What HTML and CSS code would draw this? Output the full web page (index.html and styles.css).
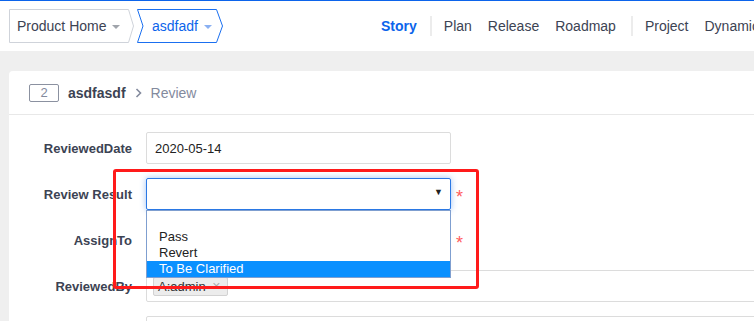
FILE: index.html
```html
<!DOCTYPE html>
<html lang="en">
<head>
  <meta charset="UTF-8">
  <title>Review Story</title>
  <meta name="viewport" content="width=device-width, initial-scale=1">
  <link rel="stylesheet" href="styles.css">
</head>
<body>
  <header class="topbar">
    <div class="crumbs">
      <a class="crumb crumb-home">
        <svg class="crumb-shape" width="125" height="34" viewBox="0 0 125 34">
          <path d="M0.5 0.5 H119.5 L124.5 17 L119.5 33.5 H0.5 Z" fill="#fff" stroke="#cfd3da"/>
        </svg>
        <span class="crumb-text">Product Home</span>
        <i class="caret"></i>
      </a>
      <a class="crumb crumb-active">
        <svg class="crumb-shape" width="86" height="34" viewBox="0 0 86 34">
          <path d="M0.5 0.5 H79.5 L85.5 17 L79.5 33.5 H0.5 L6 17 Z" fill="#fff" stroke="#1a6ff0"/>
        </svg>
        <span class="crumb-text">asdfadf</span>
        <i class="caret"></i>
      </a>
    </div>
    <nav class="nav">
      <a class="nav-item active">Story</a>
      <span class="nav-sep"></span>
      <a class="nav-item">Plan</a>
      <a class="nav-item">Release</a>
      <a class="nav-item">Roadmap</a>
      <span class="nav-sep"></span>
      <a class="nav-item">Project</a>
      <a class="nav-item">Dynamic</a>
    </nav>
  </header>

  <main class="page">
    <section class="card">
      <div class="card-head">
        <span class="story-id">2</span>
        <strong class="story-title">asdfasdf</strong>
        <svg class="chevron" width="7" height="10" viewBox="0 0 7 10">
          <path d="M1.5 1 L5.5 5 L1.5 9" fill="none" stroke="#838a9d" stroke-width="1.6"/>
        </svg>
        <span class="story-step">Review</span>
      </div>

      <form class="review-form">
        <div class="row">
          <label class="row-label">ReviewedDate</label>
          <div class="field field-short">
            <input class="input" type="text" value="2020-05-14" readonly>
          </div>
        </div>

        <div class="row">
          <label class="row-label">Review Result</label>
          <div class="field field-short">
            <div class="select focused"><span class="select-arrow">&#9660;</span></div>
            <!-- open option list -->
            <ul class="options">
              <li class="option"></li>
              <li class="option">Pass</li>
              <li class="option">Revert</li>
              <li class="option selected">To Be Clarified</li>
            </ul>
          </div>
          <span class="req">*</span>
        </div>

        <div class="row">
          <label class="row-label">AssignTo</label>
          <div class="field field-short">
            <div class="select"></div>
          </div>
          <span class="req">*</span>
        </div>

        <div class="row">
          <label class="row-label">ReviewedBy</label>
          <div class="field field-wide">
            <div class="input tags">
              <span class="tag">A:admin <b class="tag-x">&times;</b></span>
            </div>
          </div>
        </div>

        <div class="row">
          <label class="row-label"></label>
          <div class="field field-wide">
            <div class="input"></div>
          </div>
        </div>
      </form>
    </section>
  </main>

  <div class="annotation"></div>
</body>
</html>
```

FILE: styles.css
```css
body {
  margin: 0;
  padding: 0;
  width: 754px;
  height: 321px;
  overflow: hidden;
  position: relative;
  background-color: #efefef;
  font-family: 'Liberation Sans', Arial, sans-serif;
  color: #3c4353;
}

/* top bar */
.topbar {
  display: flex;
  align-items: flex-start;
  height: 42px;
  padding: 8px 0 0 9px;
  background-color: #fff;
  border-top: 1px solid #0c64eb;
  overflow: hidden;
}

.crumbs {
  display: flex;
  gap: 3px;
  flex-shrink: 0;
}

.crumb {
  position: relative;
  display: flex;
  align-items: center;
  height: 34px;
  font-size: 14px;
  cursor: pointer;
}

.crumb-shape {
  position: absolute;
  left: 0;
  top: 0;
}

.crumb-text,
.crumb .caret {
  position: relative;
}

.crumb-home {
  width: 125px;
  padding-left: 8px;
  box-sizing: border-box;
  color: #3c4353;
}

.crumb-active {
  width: 86px;
  padding-left: 15px;
  box-sizing: border-box;
  color: #0c64eb;
}

.caret {
  display: inline-block;
  margin-left: 6px;
  margin-top: 2px;
  border-top: 4px solid #a0a4ab;
  border-left: 4px solid transparent;
  border-right: 4px solid transparent;
}

.crumb-active .caret {
  border-top-color: #8ab0f2;
}

.nav {
  display: flex;
  align-items: center;
  height: 34px;
  margin-left: 158px;
  flex-shrink: 0;
  white-space: nowrap;
  font-size: 14px;
}

.nav-item {
  margin-right: 16px;
  color: #3c4353;
  cursor: pointer;
}

.nav-item.active {
  color: #0c64eb;
  font-weight: bold;
  margin-right: 14px;
}

.nav-sep {
  width: 2px;
  height: 20px;
  background-color: #ececec;
  margin: 0 12px 0 -1px;
}

/* page */
.page {
  padding: 20px 0 0 9px;
}

.card {
  background-color: #fff;
  border-radius: 4px 0 0 0;
  min-height: 260px;
}

.card-head {
  display: flex;
  align-items: center;
  height: 44px;
  box-sizing: border-box;
  padding-left: 20px;
  border-bottom: 1px solid #e8e8e8;
}

.story-id {
  width: 30px;
  height: 18px;
  box-sizing: border-box;
  border: 1px solid #8b91a0;
  border-radius: 2px;
  font-size: 13px;
  line-height: 16px;
  text-align: center;
  color: #838a9d;
}

.story-title {
  margin-left: 9px;
  font-size: 14px;
  color: #3c4353;
}

.chevron {
  margin-left: 9px;
}

.story-step {
  margin-left: 9px;
  font-size: 14px;
  color: #838a9d;
}

/* form */
.review-form {
  padding-top: 17px;
}

.row {
  display: flex;
  align-items: center;
  height: 32px;
  margin-bottom: 14px;
}

.row-label {
  width: 137px;
  flex-shrink: 0;
  box-sizing: border-box;
  padding-right: 14px;
  text-align: right;
  font-size: 13px;
  font-weight: bold;
  color: #3c4353;
}

.field {
  position: relative;
  flex-shrink: 0;
}

.field-short {
  width: 305px;
}

.field-wide {
  width: 640px;
}

.input {
  display: block;
  width: 100%;
  height: 32px;
  box-sizing: border-box;
  border: 1px solid #dcdcdc;
  border-radius: 2px;
  padding: 0 8px;
  font-family: inherit;
  font-size: 13px;
  color: #222;
  background-color: #fff;
  outline: none;
}

.select {
  position: relative;
  height: 32px;
  box-sizing: border-box;
  border: 1px solid #dcdcdc;
  border-radius: 2px;
  background-color: #fff;
}

.select.focused {
  border-color: #2a78e4;
  box-shadow: 0 0 6px rgba(42, 120, 228, 0.45);
}

.select-arrow {
  position: absolute;
  right: 7px;
  top: 8px;
  font-size: 9px;
  color: #222;
}

.options {
  position: absolute;
  left: 0;
  top: 32px;
  z-index: 5;
  width: 305px;
  box-sizing: border-box;
  margin: 0;
  padding: 2px 0 0;
  list-style: none;
  background-color: #fff;
  border: 1px solid #7f9fd0;
}

.option {
  height: 16px;
  line-height: 16px;
  padding-left: 12px;
  font-size: 13px;
  color: #222;
}

.option.selected {
  background-color: #0a90ff;
  color: #fff;
}

.req {
  margin-left: 5px;
  font-size: 18px;
  line-height: 18px;
  color: #ff5c5c;
  position: relative;
  top: 3px;
}

.tags {
  display: flex;
  align-items: flex-start;
  padding: 6px 0 0 6px;
}

.tag {
  display: inline-block;
  height: 19px;
  line-height: 17px;
  box-sizing: border-box;
  padding: 0 6px 0 4px;
  border: 1px solid #d2d2d2;
  border-radius: 2px;
  background-color: #ececec;
  font-size: 13px;
  color: #333;
}

.tag-x {
  font-weight: normal;
  font-size: 14px;
  color: #aaa;
  margin-left: 3px;
}

/* red highlight drawn over the screenshot */
.annotation {
  position: absolute;
  left: 113px;
  top: 169px;
  width: 366px;
  height: 120px;
  box-sizing: border-box;
  border: 3px solid #ff1a1a;
  border-radius: 3px;
  z-index: 10;
}
```
